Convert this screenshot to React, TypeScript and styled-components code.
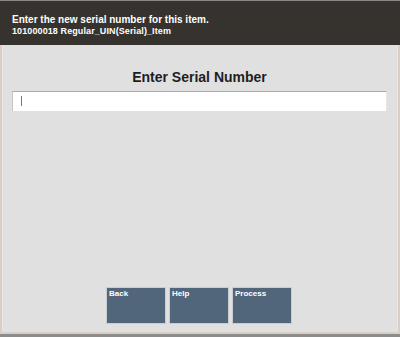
import React from "react";
import styled, { createGlobalStyle } from "styled-components";

const Global = createGlobalStyle`
  html, body { margin: 0; padding: 0; background: #e0e0e0; }
  body { font-family: "Liberation Sans", Arial, sans-serif; }
`;

const Screen = styled.div`
  width: 400px;
  height: 337px;
  display: flex;
  flex-direction: column;
  overflow: hidden;
  box-sizing: border-box;
`;

const Header = styled.header`
  height: 45px;
  box-sizing: border-box;
  background: #36332f;
  border-top: 1px solid #8a8886;
  padding: 13px 0 0 12px;
  color: #ffffff;
  display: flex;
  flex-direction: column;
`;

const Prompt = styled.div`
  font-size: 10px;
  font-weight: bold;
  line-height: 12px;
`;

const ItemLine = styled.div`
  font-size: 9px;
  font-weight: bold;
  line-height: 11px;
  letter-spacing: 0.1px;
`;

const Body = styled.main`
  flex: 1;
  background: #e0e0e0;
  border-left: 2px solid #d8cfc7;
  border-right: 2px solid #d8cfc7;
  border-bottom: 2px solid #d8cfc7;
  box-shadow: inset 1px 0 0 #ebe6e2, inset -1px 0 0 #ebe6e2;
  display: flex;
  flex-direction: column;
  align-items: stretch;
  padding: 24px 11px 0 10px;
`;

const Title = styled.h1`
  margin: 0;
  text-align: center;
  font-size: 14px;
  font-weight: bold;
  color: #1e1e1e;
  line-height: 16px;
`;

const Field = styled.div`
  margin-top: 6px;
  height: 20px;
  box-sizing: border-box;
  background: #ffffff;
  border-top: 1px solid #ababab;
  border-left: 1px solid #c4c4c4;
  border-right: 1px solid #e6e6e6;
  padding: 4px 0 0 8px;
`;

const Caret = styled.div`
  width: 1px;
  height: 10px;
  background: #777;
`;

const ButtonRow = styled.div`
  margin-top: auto;
  margin-bottom: 8px;
  display: flex;
  justify-content: center;
  gap: 3px;
  padding-right: 1px;
`;

const Button = styled.button`
  width: 60px;
  height: 37px;
  box-sizing: border-box;
  background: #52667b;
  border: 1px solid #c9ccd0;
  color: #ffffff;
  font-family: "Liberation Sans", Arial, sans-serif;
  font-size: 8px;
  font-weight: bold;
  text-align: left;
  padding: 1px 2px;
  display: flex;
  align-items: flex-start;
  cursor: pointer;
`;

const BottomBar = styled.div`
  height: 3px;
  background: #8c8c8c;
`;

export default function App() {
  return (
    <>
      <Global />
      <Screen>
        <Header>
          <Prompt>Enter the new serial number for this item.</Prompt>
          <ItemLine>101000018 Regular_UIN(Serial)_Item</ItemLine>
        </Header>
        <Body>
          <Title>Enter Serial Number</Title>
          <Field>
            <Caret />
          </Field>
          <ButtonRow>
            <Button>Back</Button>
            <Button>Help</Button>
            <Button>Process</Button>
          </ButtonRow>
        </Body>
        <BottomBar />
      </Screen>
    </>
  );
}
